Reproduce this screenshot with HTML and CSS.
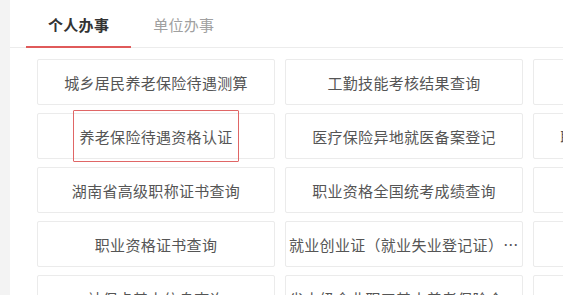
FILE: index.html
```html
<!DOCTYPE html>
<html lang="zh-CN">
<head>
<meta charset="utf-8">
<title>个人办事</title>
<link rel="stylesheet" href="styles.css">
</head>
<body>
<div class="page">
  <div class="side"></div>
  <div class="main">
    <div class="tabs">
      <div class="tab active">个人办事</div>
      <div class="tab">单位办事</div>
    </div>
    <div class="grid-wrap">
      <div class="grid">
        <div class="card"><span class="txt">城乡居民养老保险待遇测算</span></div>
        <div class="card"><span class="txt">工勤技能考核结果查询</span></div>
        <div class="card"><span class="txt">社保卡挂失</span></div>
        <div class="card"><span class="txt">养老保险待遇资格认证</span></div>
        <div class="card"><span class="txt">医疗保险异地就医备案登记</span></div>
        <div class="card"><span class="txt">职工基本医疗保险参保证明</span></div>
        <div class="card"><span class="txt">湖南省高级职称证书查询</span></div>
        <div class="card"><span class="txt">职业资格全国统考成绩查询</span></div>
        <div class="card"><span class="txt">失业登记</span></div>
        <div class="card"><span class="txt">职业资格证书查询</span></div>
        <div class="card"><span class="txt">就业创业证（就业失业登记证）查询</span></div>
        <div class="card"><span class="txt">参保信息查询</span></div>
        <div class="card"><span class="txt">社保卡基本信息查询</span></div>
        <div class="card"><span class="txt">省本级企业职工基本养老保险个人权益记录查询</span></div>
        <div class="card"><span class="txt">就业补贴申领</span></div>
      </div>
      <div class="highlight"></div>
    </div>
  </div>
</div>
</body>
</html>
```
FILE: styles.css
```css
html, body {
  margin: 0;
  padding: 0;
  background: #ffffff;
  overflow: hidden;
}
body {
  font-family: "Noto Sans CJK SC", "Noto Sans", "Liberation Sans", sans-serif;
  width: 563px;
  height: 295px;
}
.page {
  display: flex;
  height: 295px;
}
.side {
  flex: 0 0 10px;
  background: #f3f3f3;
}
.main {
  flex: 1 1 auto;
  min-width: 0;
  background: #ffffff;
}
.tabs {
  display: flex;
  padding-left: 16px;
  padding-top: 15px;
  border-bottom: 1px solid #ececec;
  height: 32px;
}
.tab {
  padding: 0 22px;
  font-size: 15px;
  line-height: 20px;
  color: #a0a0a0;
  height: 31px;
  box-sizing: border-box;
  letter-spacing: 0.3px;
}
.tab.active {
  color: #333333;
  font-weight: bold;
  border-bottom: 2px solid #e05a5a;
  height: 33px;
}
.grid-wrap {
  position: relative;
  margin-top: 11px;
  margin-left: 27px;
}
.grid {
  display: grid;
  grid-template-columns: repeat(3, 238px);
  grid-auto-rows: 46px;
  column-gap: 10px;
  row-gap: 8px;
}
.card {
  border: 1px solid #ebebeb;
  border-radius: 2px;
  box-sizing: border-box;
  display: flex;
  align-items: center;
  justify-content: center;
  padding: 0 3px;
  overflow: hidden;
}
.txt {
  display: block;
  max-width: 100%;
  white-space: nowrap;
  overflow: hidden;
  text-overflow: ellipsis;
  font-size: 15px;
  color: #555555;
  letter-spacing: 0.3px;
}
.highlight {
  position: absolute;
  left: 36px;
  top: 51px;
  width: 166px;
  height: 52px;
  border: 1.5px solid #e06666;
  box-sizing: border-box;
  border-radius: 1px;
}
```
